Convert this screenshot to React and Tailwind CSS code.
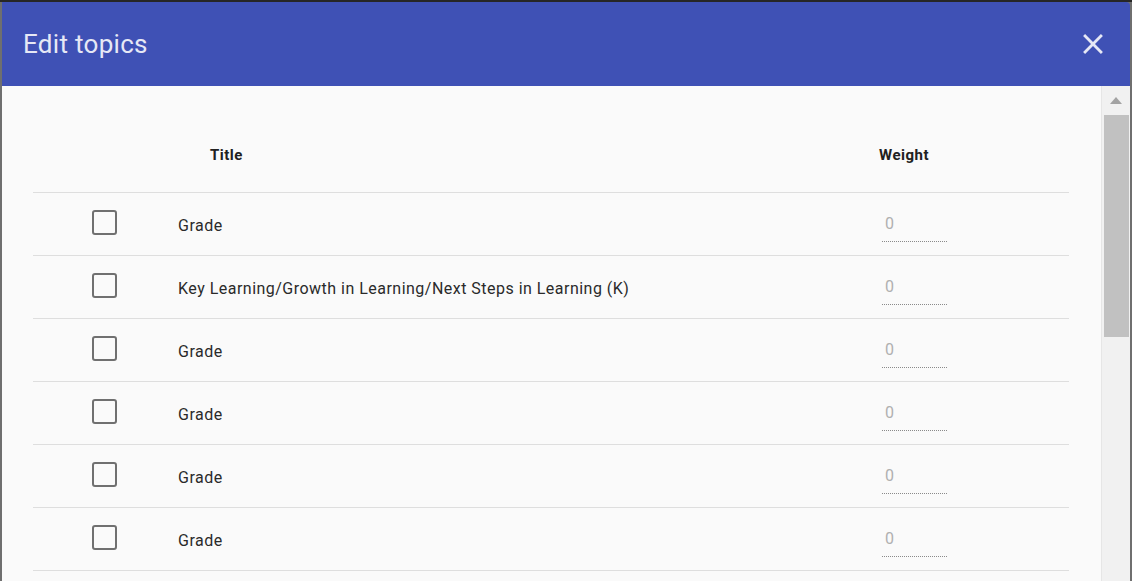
const rows = [
  "Grade",
  "Key Learning/Growth in Learning/Next Steps in Learning (K)",
  "Grade",
  "Grade",
  "Grade",
  "Grade",
];

function Checkbox() {
  return (
    <div className="w-[25px] h-[25px] mb-[4px] border-2 border-[#707070] rounded-[3px] bg-transparent" />
  );
}

function TopicRow({ title }) {
  return (
    <div className="flex items-center h-[63px] shrink-0 border-b border-[#dedede]">
      <div className="w-[145px] pl-[59px] flex items-center">
        <Checkbox />
      </div>
      <div className="w-[701px] pt-[4px] text-[16px] text-[#2a2a2a] tracking-[0.48px]">{title}</div>
      <div className="pl-[3px] flex flex-col pt-[5px]">
        <div className="w-[65px] h-[31px] pl-[3px] pt-[2px] text-[16px] text-[#b0b0b0] border-b border-dotted border-[#8a8a8a] leading-[22px]">
          0
        </div>
      </div>
    </div>
  );
}

export default function App() {
  return (
    <div
      className="w-[1132px] h-[581px] overflow-hidden bg-[#6f6f6f] flex flex-col"
      style={{ fontFamily: "Roboto, 'Noto Sans', sans-serif" }}
    >
      <div className="h-[2px] bg-[#262626] shrink-0" />
      <div className="flex-1 flex flex-col ml-[2px] mr-[2px] rounded-tr-[4px] overflow-hidden">
        <div className="h-[84px] shrink-0 bg-[#3f51b5] flex items-center justify-between pl-[21px] pr-[20px]">
          <h1 className="text-[26px] tracking-[0.3px] text-[#e6e8f5] font-normal">Edit topics</h1>
          <svg width="34" height="34" viewBox="0 0 24 24">
            <path
              fill="#e6e8f5"
              d="M19 6.41L17.59 5 12 10.59 6.41 5 5 6.41 10.59 12 5 17.59 6.41 19 12 13.41 17.59 19 19 17.59 13.41 12z"
            />
          </svg>
        </div>
        <div className="flex-1 flex min-h-0">
          <div className="flex-1 bg-[#fafafa] pl-[31px] pr-[32px] pt-[42px] flex flex-col overflow-hidden">
            <div className="flex items-center h-[65px] pb-[9px] shrink-0 border-b border-[#dedede] text-[15px] tracking-[0.5px] font-bold text-[#212121]">
              <div className="w-[145px]" />
              <div className="w-[701px] pl-[32px]">Title</div>
              <div>Weight</div>
            </div>
            {rows.map((t, i) => (
              <TopicRow key={i} title={t} />
            ))}
          </div>
          <div className="w-[29px] bg-[#f1f1f1] border-l border-[#e6e6e6] flex flex-col items-center">
            <svg width="12" height="8" viewBox="0 0 12 8" className="mt-[11px]">
              <polygon points="6,0 12,7 0,7" fill="#a3a3a3" />
            </svg>
            <div className="w-[25px] h-[222px] bg-[#c1c1c1] mt-[10px] ml-[1px]" />
          </div>
        </div>
      </div>
    </div>
  );
}
